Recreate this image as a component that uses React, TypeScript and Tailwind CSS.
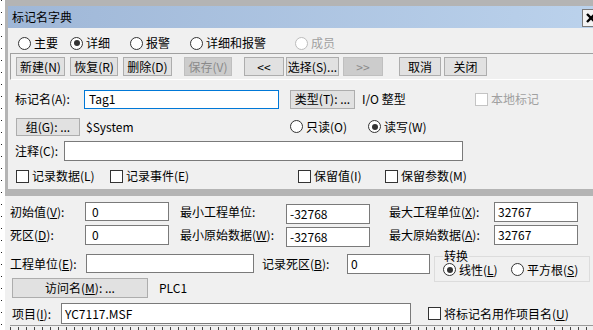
import type { ReactNode } from 'react'

type RadioProps = { label: ReactNode; checked?: boolean; disabled?: boolean; className?: string }

function Radio({ label, checked = false, disabled = false, className = '' }: RadioProps) {
  return (
    <div className={`flex items-center shrink-0 ${className}`}>
      <span
        className={`w-[13px] h-[13px] rounded-full border bg-white flex items-center justify-center shrink-0 ${
          disabled ? 'border-[#bcbcbc]' : 'border-[#333333]'
        }`}
      >
        {checked ? <span className="w-[6px] h-[6px] rounded-full bg-[#333333]" /> : null}
      </span>
      <span className={`ml-[3px] whitespace-nowrap ${disabled ? 'text-[#a0a0a0]' : ''}`}>{label}</span>
    </div>
  )
}

function Check({ label, disabled = false, className = '' }: { label: ReactNode; disabled?: boolean; className?: string }) {
  return (
    <div className={`flex items-center shrink-0 ${className}`}>
      <span className={`w-[13px] h-[13px] border bg-white shrink-0 ${disabled ? 'border-[#c4c4c4]' : 'border-[#333333]'}`} />
      <span className={`ml-[3px] whitespace-nowrap ${disabled ? 'text-[#a0a0a0]' : ''}`}>{label}</span>
    </div>
  )
}

function Btn({ children, disabled = false, className = '' }: { children: ReactNode; disabled?: boolean; className?: string }) {
  return (
    <div
      className={`flex items-center justify-center border whitespace-nowrap shrink-0 ${
        disabled ? 'bg-[#cccccc] border-[#bfbfbf] text-[#8a8a8a]' : 'bg-[#e1e1e1] border-[#adadad]'
      } ${className}`}
    >
      {children}
    </div>
  )
}

function Field({ value = '', focused = false, className = '' }: { value?: string; focused?: boolean; className?: string }) {
  return (
    <div
      className={`bg-white border flex items-center whitespace-nowrap shrink-0 ${
        focused ? 'border-[#0078d7]' : 'border-[#7a7a7a]'
      } ${className}`}
    >
      {value}
    </div>
  )
}

// mnemonic letter, underlined like the old win32 labels
function U({ children }: { children: ReactNode }) {
  return <span className="underline underline-offset-[1px]">{children}</span>
}

export default function App() {
  return (
    <div className="w-[593px] h-[330px] overflow-hidden flex bg-[#f0f0f0] text-[12px] leading-[14px] text-black font-['Noto_Sans_CJK_SC','Noto_Sans',sans-serif]">
      {/* left gutter of the host window */}
      <div className="w-[5px] h-full bg-white shrink-0 flex">
        <div className="ml-[1px] w-[1px] h-full bg-[repeating-linear-gradient(to_bottom,#222_0_1px,transparent_1px_12px)]" />
      </div>

      <div className="flex-1 min-w-0 flex flex-col">
        {/* dialog */}
        <div className="w-[595px] shrink-0 border-l-[3px] border-t-[6px] border-b-[7px] border-[#b4b4b4]">
          <div className="h-[22px] flex items-start justify-between bg-gradient-to-r from-[#9fb7d7] to-[#bbd2ec]">
            <span className="mt-[4px] ml-[4px]">标记名字典</span>
            <div className="mt-[3px] w-[18px] h-[18px] border border-[#7a7a7a] bg-[#f3f3f3] flex items-center pl-[3px]">
              <svg width="10" height="10" viewBox="0 0 10 10">
                <path d="M1 1 L9 9 M9 1 L1 9" stroke="#000" strokeWidth="2.4" />
              </svg>
            </div>
          </div>

          <div className="h-[161px] flex flex-col">
            <div className="mt-[7px] h-[16px] flex items-center pl-[10px]">
              <Radio label="主要" className="w-[52px]" />
              <Radio label="详细" checked className="w-[60px]" />
              <Radio label="报警" className="w-[60px]" />
              <Radio label="详细和报警" className="w-[105px]" />
              <Radio label="成员" disabled />
            </div>

            <div className="mt-[2px] ml-[2px] h-[27px] border-t border-l border-[#a0a0a0] border-b border-b-white flex items-start pt-[3px]">
              <Btn className="ml-[5px] w-[49px] h-[19px]">新建(N)</Btn>
              <Btn className="ml-[5px] w-[48px] h-[19px]">恢复(R)</Btn>
              <Btn className="ml-[5px] w-[49px] h-[19px]">删除(D)</Btn>
              <Btn disabled className="ml-[12px] w-[48px] h-[19px]">保存(V)</Btn>
              <Btn className="ml-[12px] w-[40px] h-[19px]">&lt;&lt;</Btn>
              <Btn className="ml-[2px] w-[53px] h-[19px]">选择(S)...</Btn>
              <Btn disabled className="ml-[4px] w-[40px] h-[19px]">&gt;&gt;</Btn>
              <Btn className="ml-[16px] w-[42px] h-[19px]">取消</Btn>
              <Btn className="ml-[3px] w-[43px] h-[19px]">关闭</Btn>
            </div>

            <div className="mt-[9px] h-[20px] flex items-center pl-[7px]">
              <span className="w-[69px] shrink-0">标记名(A):</span>
              <Field value="Tag1" focused className="w-[195px] h-[19px] pl-[4px]" />
              <Btn className="ml-[11px] w-[65px] h-[19px]">类型(T): ...</Btn>
              <span className="ml-[7px] w-[113px] shrink-0">I/O 整型</span>
              <Check label="本地标记" disabled />
            </div>

            <div className="mt-[8px] h-[19px] flex items-center pl-[8px]">
              <Btn className="w-[64px] h-[18px]">组(G): ...</Btn>
              <span className="ml-[6px] w-[204px] shrink-0">$System</span>
              <Radio label="只读(O)" className="w-[78px]" />
              <Radio label="读写(W)" checked />
            </div>

            <div className="mt-[5px] h-[20px] flex items-center pl-[7px]">
              <span className="w-[49px] shrink-0">注释(C):</span>
              <Field className="w-[399px] h-[20px]" />
            </div>

            <div className="mt-[8px] h-[14px] flex items-center pl-[8px]">
              <Check label="记录数据(L)" className="w-[94px]" />
              <Check label="记录事件(E)" className="w-[188px]" />
              <Check label="保留值(I)" className="w-[87px]" />
              <Check label="保留参数(M)" />
            </div>
          </div>
        </div>

        {/* host window underneath */}
        <div className="flex-1 flex flex-col pl-[5px]">
          <div className="mt-[6px] h-[20px] flex items-start">
            <span className="w-[75px] h-[20px] flex items-center shrink-0">初始值(<U>V</U>):</span>
            <Field value="0" className="w-[84px] h-[19px] pl-[6px]" />
            <span className="ml-[11px] w-[106px] h-[20px] flex items-center shrink-0">最小工程单位:</span>
            <Field value="-32768" className="mt-[2px] w-[84px] h-[20px] pl-[3px]" />
            <span className="ml-[19px] w-[105px] h-[20px] flex items-center shrink-0">最大工程单位(<U>X</U>):</span>
            <Field value="32767" className="w-[84px] h-[20px] pl-[3px]" />
          </div>

          <div className="mt-[3px] h-[20px] flex items-start">
            <span className="w-[75px] h-[20px] flex items-center shrink-0">死区(<U>D</U>):</span>
            <Field value="0" className="w-[84px] h-[20px] pl-[6px]" />
            <span className="ml-[11px] w-[106px] h-[20px] flex items-center shrink-0">最小原始数据(<U>W</U>):</span>
            <Field value="-32768" className="mt-[2px] w-[84px] h-[20px] pl-[3px]" />
            <span className="ml-[19px] w-[105px] h-[20px] flex items-center shrink-0">最大原始数据(<U>A</U>):</span>
            <Field value="32767" className="w-[84px] h-[20px] pl-[3px]" />
          </div>

          <div className="mt-[9px] h-[20px] flex items-start">
            <span className="w-[76px] h-[20px] flex items-center shrink-0">工程单位(<U>E</U>):</span>
            <Field className="w-[168px] h-[19px]" />
            <span className="ml-[8px] w-[85px] h-[20px] flex items-center shrink-0">记录死区(<U>B</U>):</span>
            <Field value="0" className="w-[83px] h-[20px] pl-[3px]" />
            <fieldset className="ml-[4px] -mt-[5px] w-[156px] h-[33px] shrink-0 border border-[#dcdcdc] px-[8px]">
              <legend className="px-[1px] leading-[14px]">转换</legend>
              <div className="flex items-center h-[13px]">
                <Radio label={<>线性(<U>L</U>)</>} checked className="w-[68px]" />
                <Radio label={<>平方根(<U>S</U>)</>} />
              </div>
            </fieldset>
          </div>

          <div className="mt-[4px] h-[20px] flex items-center pl-[2px]">
            <Btn className="w-[136px] h-[20px]">
              <span>
                访问名(<U>M</U>): ...
              </span>
            </Btn>
            <span className="ml-[11px]">PLC1</span>
          </div>

          <div className="mt-[5px] h-[21px] flex items-center pl-[2px]">
            <span className="w-[49px] shrink-0">项目(<U>I</U>):</span>
            <Field value="YC7117.MSF" className="w-[350px] h-[21px] pl-[3px]" />
            <Check label={<>将标记名用作项目名(<U>U</U>)</>} className="ml-[17px]" />
          </div>

          <div className="mt-[1px] h-[5px] border-t border-[#9a9a9a]">
            <div className="mt-[1px] h-[3px] bg-[repeating-linear-gradient(to_right,#444_0_1px,transparent_1px_8px)]" />
          </div>
        </div>
      </div>
    </div>
  )
}
